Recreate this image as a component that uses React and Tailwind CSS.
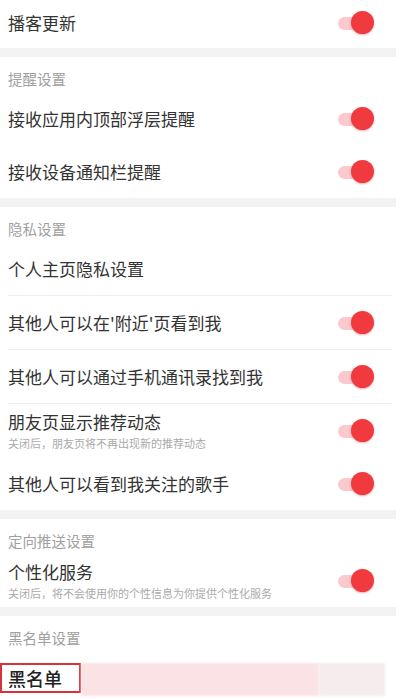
import React from "react";

const font = { fontFamily: '"Noto Sans CJK SC", "Noto Sans", sans-serif' };

function Toggle() {
  return (
    <div className="relative w-[36px] h-[24px] shrink-0">
      <div className="absolute left-0 top-[6px] w-[30px] h-[13px] rounded-full bg-[#f9c9cd]" />
      <div className="absolute right-0 top-0 w-[23px] h-[23px] rounded-full bg-[#f13a3e] shadow-[0_1px_2px_rgba(180,30,40,0.35)]" />
    </div>
  );
}

function Row({ title, sub, toggle = true, divider = false }) {
  return (
    <>
      <div className="h-[53px] flex items-center justify-between pl-[8px] pr-[22px]">
        <div className="flex flex-col">
          <span className="text-[17px] leading-[22px] text-[#333]">{title}</span>
          {sub && <span className="text-[11px] leading-[14px] text-[#aaa] mt-[3px]">{sub}</span>}
        </div>
        {toggle && <Toggle />}
      </div>
      {divider && <div className="h-px bg-[#eeeeee] ml-[8px] mr-[4px]" />}
    </>
  );
}

function Header({ children }) {
  return (
    <div className="h-[35px] pl-[8px] pt-[12px] text-[14.5px] leading-[20px] text-[#a0a0a0]">{children}</div>
  );
}

function Band() {
  return <div className="h-[9px] bg-[#f3f3f3]" />;
}

export default function App() {
  return (
    <div className="w-[400px] h-[699px] overflow-hidden bg-white" style={font}>
      <div className="w-[396px]">
        <div className="h-[48px] flex items-center justify-between pl-[8px] pr-[22px] pb-[3px]">
          <span className="text-[17px] leading-[22px] text-[#333]">播客更新</span>
          <Toggle />
        </div>
        <Band />
        <Header>提醒设置</Header>
        <Row title="接收应用内顶部浮层提醒" />
        <Row title="接收设备通知栏提醒" />
        <Band />
        <Header>隐私设置</Header>
        <Row title="个人主页隐私设置" toggle={false} divider />
        <Row title="其他人可以在'附近'页看到我" divider />
        <Row title="其他人可以通过手机通讯录找到我" divider />
        <Row title="朋友页显示推荐动态" sub="关闭后，朋友页将不再出现新的推荐动态" />
        <Row title="其他人可以看到我关注的歌手" />
        <Band />
        <Header>定向推送设置</Header>
        <Row title="个性化服务" sub="关闭后，将不会使用你的个性信息为你提供个性化服务" />
        <Band />
        <Header>黑名单设置</Header>
        <div className="h-[53px] flex items-start pt-[12px]">
          <div className="w-[81px] h-[30px] border-2 border-[#d8333c] flex items-center pl-[6px] text-[18px] font-medium text-[#222] shrink-0">
            黑名单
          </div>
          <div className="w-[238px] h-[33px] bg-[#fbe2e4] blur-[1px]" />
          <div className="w-[66px] h-[33px] bg-[#f5eded] blur-[1px]" />
        </div>
      </div>
    </div>
  );
}
